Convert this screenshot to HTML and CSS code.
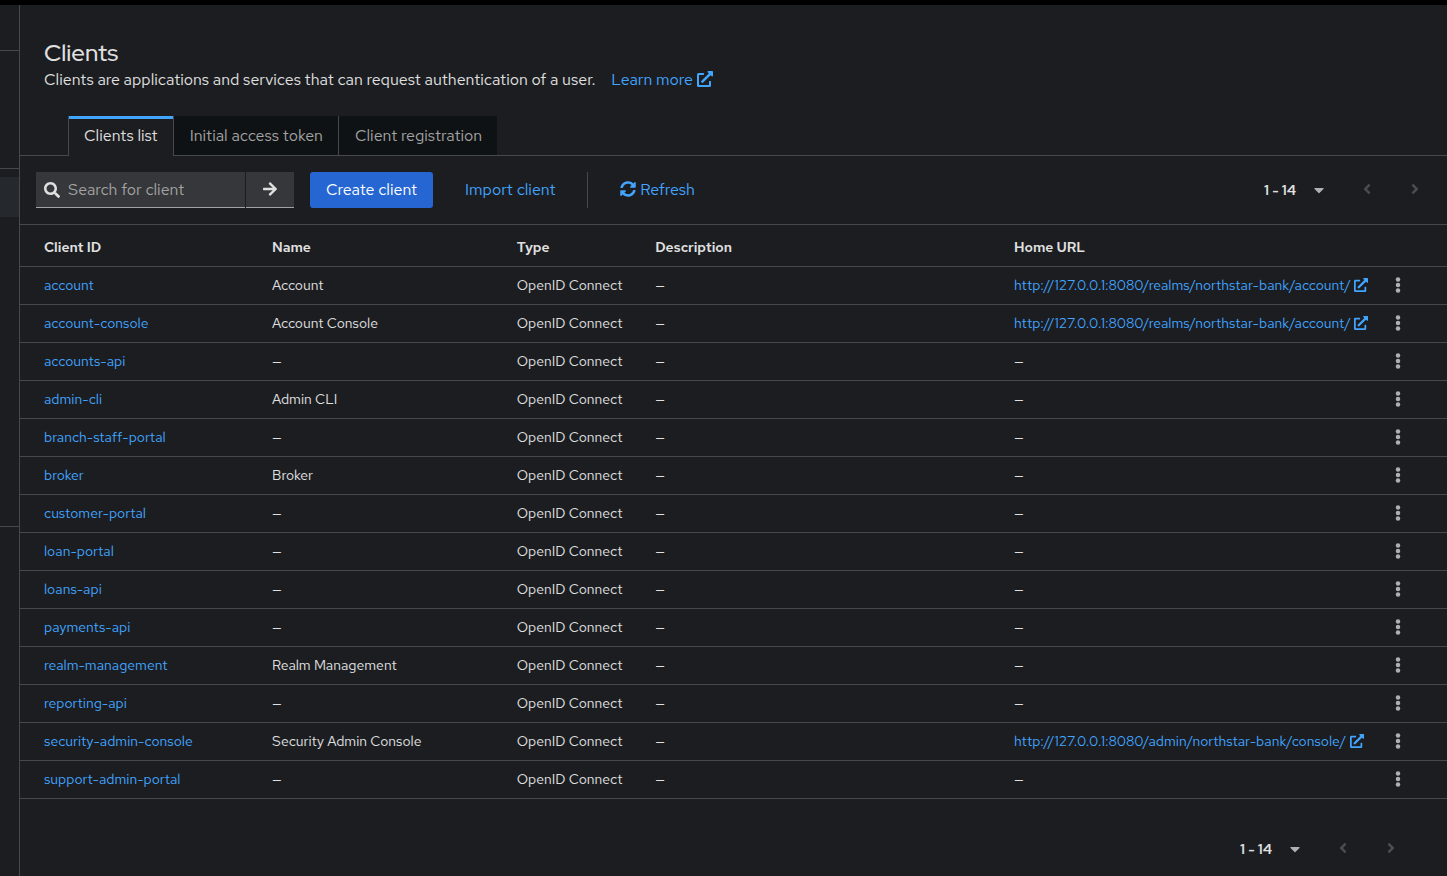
FILE: index.html
```
<!DOCTYPE html>
<html lang="en">
<head>
    <meta charset="utf-8">
    <meta name="viewport" content="width=device-width,initial-scale=1.0">
    <title>Clients</title>
    <link rel="stylesheet" href="styles.css">
</head>
<body>
<svg class="sprite" aria-hidden="true">
    <symbol id="icon-external" viewBox="0 0 512 512">
        <path d="M432,320H400a16,16,0,0,0-16,16V448H64V128H208a16,16,0,0,0,16-16V80a16,16,0,0,0-16-16H48A48,48,0,0,0,0,112V464a48,48,0,0,0,48,48H400a48,48,0,0,0,48-48V336A16,16,0,0,0,432,320ZM488,0h-128c-21.37,0-32.05,25.91-17,41l35.73,35.73L135,320.37a24,24,0,0,0,0,34L157.67,377a24,24,0,0,0,34,0L435.28,133.32,471,169c15,15,41,4.5,41-17V24A24,24,0,0,0,488,0Z"/>
    </symbol>
    <symbol id="icon-search" viewBox="0 0 512 512">
        <path d="M505 442.7L405.3 343c-4.5-4.5-10.6-7-17-7H372c27.6-35.3 44-79.7 44-128C416 93.1 322.9 0 208 0S0 93.1 0 208s93.1 208 208 208c48.3 0 92.7-16.4 128-44v16.3c0 6.4 2.5 12.5 7 17l99.7 99.7c9.4 9.4 24.6 9.4 33.9 0l28.3-28.3c9.4-9.4 9.4-24.6.1-34zM208 336c-70.7 0-128-57.2-128-128 0-70.7 57.2-128 128-128 70.7 0 128 57.2 128 128 0 70.7-57.2 128-128 128z"/>
    </symbol>
    <symbol id="icon-arrow" viewBox="0 0 448 512">
        <path d="M190.5 66.9l22.2-22.2c9.4-9.4 24.6-9.4 33.9 0L441 239c9.4 9.4 9.4 24.6 0 33.9L246.6 467.3c-9.4 9.4-24.6 9.4-33.9 0l-22.2-22.2c-9.5-9.5-9.3-25 .4-34.3L311.4 296H24c-13.3 0-24-10.7-24-24v-32c0-13.3 10.7-24 24-24h287.4L190.9 101.2c-9.8-9.3-10-24.8-.4-34.3z"/>
    </symbol>
    <symbol id="icon-sync" viewBox="0 0 512 512">
        <path d="M370.72 133.28C339.458 104.008 298.888 87.962 255.848 88c-77.458.068-144.328 53.178-162.791 126.85-1.344 5.363-6.122 9.15-11.651 9.15H24.103c-7.498 0-13.194-6.807-11.807-14.176C33.933 94.924 134.813 8 256 8c66.448 0 126.791 26.136 171.315 68.685L463.03 40.97C478.149 25.851 504 36.559 504 57.941V192c0 13.255-10.745 24-24 24H345.941c-21.382 0-32.09-25.851-16.971-40.971l41.75-41.749zM32 296h134.059c21.382 0 32.09 25.851 16.971 40.971l-41.75 41.75c31.262 29.273 71.835 45.319 114.876 45.28 77.418-.07 144.315-53.144 162.787-126.849 1.344-5.363 6.122-9.15 11.651-9.15h57.304c7.498 0 13.194 6.807 11.807 14.176C478.067 417.076 377.187 504 256 504c-66.448 0-126.791-26.136-171.315-68.685L48.97 471.03C33.851 486.149 8 475.441 8 454.059V320c0-13.255 10.745-24 24-24z"/>
    </symbol>
    <symbol id="icon-caret" viewBox="0 0 320 512">
        <path d="M31.3 192h257.3c17.8 0 26.7 21.5 14.1 34.1L174.1 354.8c-7.8 7.8-20.5 7.8-28.3 0L17.2 226.1C4.6 213.5 13.5 192 31.3 192z"/>
    </symbol>
    <symbol id="icon-left" viewBox="0 0 256 512">
        <path d="M31.7 239l136-136c9.4-9.4 24.6-9.4 33.9 0l22.6 22.6c9.4 9.4 9.4 24.6 0 33.9L127.9 256l96.4 96.4c9.4 9.4 9.4 24.6 0 33.9L201.7 409c-9.4 9.4-24.6 9.4-33.9 0l-136-136c-9.5-9.4-9.5-24.6-.1-34z"/>
    </symbol>
    <symbol id="icon-right" viewBox="0 0 256 512">
        <path d="M224.3 273l-136 136c-9.4 9.4-24.6 9.4-33.9 0l-22.6-22.6c-9.4-9.4-9.4-24.6 0-33.9l96.4-96.4-96.4-96.4c-9.4-9.4-9.4-24.6 0-33.9L54.3 103c9.4-9.4 24.6-9.4 33.9 0l136 136c9.5 9.4 9.5 24.6.1 34z"/>
    </symbol>
    <symbol id="icon-kebab" viewBox="0 0 192 512">
        <circle cx="96" cy="80" r="72"/>
        <circle cx="96" cy="256" r="72"/>
        <circle cx="96" cy="432" r="72"/>
    </symbol>
</svg>
<div class="page">
    <aside class="sidebar">
        <div class="nav-brand"></div>
        <div class="nav-group"></div>
        <div class="nav-group nav-manage">
            <div class="nav-current"></div>
        </div>
    </aside>
    <main class="main">
        <header class="page-header">
            <h1>Clients</h1>
            <p>
                Clients are applications and services that can request authentication of a user.
                <a class="learn-more" href="#">Learn more <svg class="icon"><use href="#icon-external"/></svg></a>
            </p>
        </header>
        <nav class="tabs">
            <button type="button" class="tab active">Clients list</button>
            <button type="button" class="tab">Initial access token</button>
            <button type="button" class="tab">Client registration</button>
        </nav>
        <div class="toolbar">
            <form class="search">
                <label class="search-box">
                    <svg class="icon"><use href="#icon-search"/></svg>
                    <input type="search" placeholder="Search for client" aria-label="Search for client">
                </label>
                <button type="button" class="search-btn" aria-label="Search"><svg class="icon"><use href="#icon-arrow"/></svg></button>
            </form>
            <button type="button" class="btn btn-primary">Create client</button>
            <button type="button" class="btn btn-link">Import client</button>
            <div class="divider"></div>
            <button type="button" class="btn btn-link"><svg class="icon"><use href="#icon-sync"/></svg> Refresh</button>
            <div class="pagination">
                <button type="button" class="page-range">1 - 14 <svg class="icon"><use href="#icon-caret"/></svg></button>
                <button type="button" class="page-btn" aria-label="Previous page" disabled><svg class="icon"><use href="#icon-left"/></svg></button>
                <button type="button" class="page-btn" aria-label="Next page" disabled><svg class="icon"><use href="#icon-right"/></svg></button>
            </div>
        </div>
        <table class="clients">
            <colgroup>
                <col class="col-id">
                <col class="col-name">
                <col class="col-type">
                <col class="col-desc">
                <col class="col-url">
                <col class="col-action">
            </colgroup>
            <thead>
            <tr>
                <th>Client ID</th>
                <th>Name</th>
                <th>Type</th>
                <th>Description</th>
                <th>Home URL</th>
                <td></td>
            </tr>
            </thead>
            <tbody>
            <tr>
                <td><a href="#">account</a></td>
                <td>Account</td>
                <td>OpenID Connect</td>
                <td>—</td>
                <td><a href="#">http://127.0.0.1:8080/realms/northstar-bank/account/ <svg class="icon"><use href="#icon-external"/></svg></a></td>
                <td><button type="button" class="kebab" aria-label="Actions"><svg class="icon"><use href="#icon-kebab"/></svg></button></td>
            </tr>
            <tr>
                <td><a href="#">account-console</a></td>
                <td>Account Console</td>
                <td>OpenID Connect</td>
                <td>—</td>
                <td><a href="#">http://127.0.0.1:8080/realms/northstar-bank/account/ <svg class="icon"><use href="#icon-external"/></svg></a></td>
                <td><button type="button" class="kebab" aria-label="Actions"><svg class="icon"><use href="#icon-kebab"/></svg></button></td>
            </tr>
            <tr>
                <td><a href="#">accounts-api</a></td>
                <td>—</td>
                <td>OpenID Connect</td>
                <td>—</td>
                <td>—</td>
                <td><button type="button" class="kebab" aria-label="Actions"><svg class="icon"><use href="#icon-kebab"/></svg></button></td>
            </tr>
            <tr>
                <td><a href="#">admin-cli</a></td>
                <td>Admin CLI</td>
                <td>OpenID Connect</td>
                <td>—</td>
                <td>—</td>
                <td><button type="button" class="kebab" aria-label="Actions"><svg class="icon"><use href="#icon-kebab"/></svg></button></td>
            </tr>
            <tr>
                <td><a href="#">branch-staff-portal</a></td>
                <td>—</td>
                <td>OpenID Connect</td>
                <td>—</td>
                <td>—</td>
                <td><button type="button" class="kebab" aria-label="Actions"><svg class="icon"><use href="#icon-kebab"/></svg></button></td>
            </tr>
            <tr>
                <td><a href="#">broker</a></td>
                <td>Broker</td>
                <td>OpenID Connect</td>
                <td>—</td>
                <td>—</td>
                <td><button type="button" class="kebab" aria-label="Actions"><svg class="icon"><use href="#icon-kebab"/></svg></button></td>
            </tr>
            <tr>
                <td><a href="#">customer-portal</a></td>
                <td>—</td>
                <td>OpenID Connect</td>
                <td>—</td>
                <td>—</td>
                <td><button type="button" class="kebab" aria-label="Actions"><svg class="icon"><use href="#icon-kebab"/></svg></button></td>
            </tr>
            <tr>
                <td><a href="#">loan-portal</a></td>
                <td>—</td>
                <td>OpenID Connect</td>
                <td>—</td>
                <td>—</td>
                <td><button type="button" class="kebab" aria-label="Actions"><svg class="icon"><use href="#icon-kebab"/></svg></button></td>
            </tr>
            <tr>
                <td><a href="#">loans-api</a></td>
                <td>—</td>
                <td>OpenID Connect</td>
                <td>—</td>
                <td>—</td>
                <td><button type="button" class="kebab" aria-label="Actions"><svg class="icon"><use href="#icon-kebab"/></svg></button></td>
            </tr>
            <tr>
                <td><a href="#">payments-api</a></td>
                <td>—</td>
                <td>OpenID Connect</td>
                <td>—</td>
                <td>—</td>
                <td><button type="button" class="kebab" aria-label="Actions"><svg class="icon"><use href="#icon-kebab"/></svg></button></td>
            </tr>
            <tr>
                <td><a href="#">realm-management</a></td>
                <td>Realm Management</td>
                <td>OpenID Connect</td>
                <td>—</td>
                <td>—</td>
                <td><button type="button" class="kebab" aria-label="Actions"><svg class="icon"><use href="#icon-kebab"/></svg></button></td>
            </tr>
            <tr>
                <td><a href="#">reporting-api</a></td>
                <td>—</td>
                <td>OpenID Connect</td>
                <td>—</td>
                <td>—</td>
                <td><button type="button" class="kebab" aria-label="Actions"><svg class="icon"><use href="#icon-kebab"/></svg></button></td>
            </tr>
            <tr>
                <td><a href="#">security-admin-console</a></td>
                <td>Security Admin Console</td>
                <td>OpenID Connect</td>
                <td>—</td>
                <td><a href="#">http://127.0.0.1:8080/admin/northstar-bank/console/ <svg class="icon"><use href="#icon-external"/></svg></a></td>
                <td><button type="button" class="kebab" aria-label="Actions"><svg class="icon"><use href="#icon-kebab"/></svg></button></td>
            </tr>
            <tr>
                <td><a href="#">support-admin-portal</a></td>
                <td>—</td>
                <td>OpenID Connect</td>
                <td>—</td>
                <td>—</td>
                <td><button type="button" class="kebab" aria-label="Actions"><svg class="icon"><use href="#icon-kebab"/></svg></button></td>
            </tr>
            </tbody>
        </table>
        <footer class="table-footer">
            <div class="pagination">
                <button type="button" class="page-range">1 - 14 <svg class="icon"><use href="#icon-caret"/></svg></button>
                <button type="button" class="page-btn" aria-label="Previous page" disabled><svg class="icon"><use href="#icon-left"/></svg></button>
                <button type="button" class="page-btn" aria-label="Next page" disabled><svg class="icon"><use href="#icon-right"/></svg></button>
            </div>
        </footer>
    </main>
</div>
</body>
</html>
```
FILE: styles.css
```
* {
    box-sizing: border-box;
    margin: 0;
    padding: 0;
}

body {
    border-top: 5px solid #000;
    background-color: #1b1d21;
    color: #e0e0e0;
    font-family: 'Red Hat Text', Roboto, 'Liberation Sans', sans-serif;
    font-size: 16px;
    line-height: 24px;
}

button,
input {
    border: 0;
    background: none;
    color: inherit;
    font: inherit;
}

a {
    color: #42a5ff;
    text-decoration: none;
}

.sprite {
    display: none;
}

.icon {
    flex-shrink: 0;
    width: 1em;
    height: 1em;
    fill: currentColor;
    vertical-align: -2px;
}

.page {
    display: flex;
    min-height: calc(100vh - 5px);
}

/* sidebar */
.sidebar {
    width: 20px;
    flex-shrink: 0;
    border-right: 1px solid #46484c;
}

.nav-brand {
    height: 46px;
    border-bottom: 1px solid #46484c;
}

.nav-group {
    height: 118px;
    border-bottom: 1px solid #46484c;
}

.nav-manage {
    height: 358px;
    padding-top: 8px;
}

.nav-current {
    height: 40px;
    background-color: #25292d;
}

/* page header */
.main {
    flex: 1;
    min-width: 0;
}

.page-header {
    padding: 32px 24px 24px;
}

.page-header h1 {
    font-family: 'Red Hat Display', 'Red Hat Text', Roboto, 'Liberation Sans', sans-serif;
    font-size: 24px;
    font-weight: 500;
    line-height: 31px;
}

.learn-more {
    margin-left: 12px;
}

/* tabs */
.tabs {
    display: flex;
    padding-left: 48px;
    border-bottom: 1px solid #46484c;
}

.tab {
    height: 39px;
    padding: 0 16px;
    border-right: 1px solid #46484c;
    background-color: #0f1214;
    color: #a3a3a3;
}

.tab + .tab {
    padding-right: 15px;
}

.tab:last-child {
    border-right: 0;
}

.tab.active {
    height: 40px;
    margin-bottom: -1px;
    padding: 0 15px;
    border-left: 1px solid #46484c;
    background-color: #1b1d21;
    box-shadow: inset 0 3px #42a5ff;
    color: #e0e0e0;
}

/* toolbar */
.toolbar {
    display: flex;
    align-items: center;
    gap: 16px;
    padding: 16px;
    border-bottom: 1px solid #46484c;
}

.search {
    display: flex;
    gap: 1px;
}

.search-box,
.search-btn {
    height: 36px;
    border-bottom: 1px solid #a3a3a3;
    background-color: #36373a;
}

.search-box {
    display: flex;
    align-items: center;
    gap: 8px;
    width: 209px;
    padding: 0 8px;
}

.search-box input {
    width: 100%;
    min-width: 0;
}

.search-box input::placeholder {
    color: #a3a3a3;
}

.search-btn {
    width: 48px;
}

.btn {
    height: 36px;
    padding: 0 16px;
    border-radius: 3px;
}

.btn-primary {
    background-color: #2666d2;
    color: #fff;
}

.btn-link {
    color: #42a5ff;
}

.divider {
    width: 1px;
    height: 36px;
    background-color: #46484c;
}

.pagination {
    display: flex;
    align-items: center;
    gap: 16px;
    margin-left: auto;
}

.page-range {
    display: flex;
    align-items: center;
    gap: 15px;
    height: 36px;
    padding: 0 8px;
    font-size: 14px;
    font-weight: 600;
}

.page-range .icon {
    width: 16px;
    height: 16px;
    color: #b0b0b0;
}

.page-btn {
    width: 32px;
    height: 36px;
    color: #4a4c50;
}

/* clients table */
.clients {
    width: 100%;
    border-collapse: collapse;
    table-layout: fixed;
    font-size: 14px;
    line-height: 21px;
}

.clients tr {
    border-bottom: 1px solid #46484c;
}

.clients th,
.clients td {
    padding: 8px;
    text-align: left;
    white-space: nowrap;
}

.clients th {
    padding: 12px 8px 8px;
    font-weight: 600;
}

.clients th:first-child,
.clients td:first-child {
    padding-left: 24px;
}

.col-id {
    width: 17.1%;
}

.col-name {
    width: 17.15%;
}

.col-type {
    width: 9.7%;
}

.col-desc {
    width: 25.15%;
}

.col-url {
    width: 25.8%;
}

.col-action {
    width: 5.1%;
}

.kebab {
    display: flex;
    justify-content: center;
    width: 32px;
    height: 21px;
    padding-top: 2px;
    color: #b0b0b0;
    font-size: 16px;
}

.table-footer {
    display: flex;
    padding: 32px 40px 8px;
}
```
